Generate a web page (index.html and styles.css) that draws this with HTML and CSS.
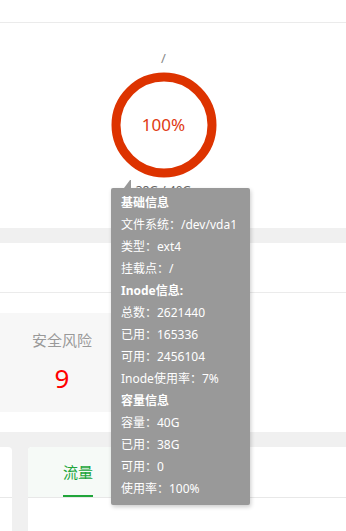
FILE: index.html
```html
<!DOCTYPE html>
<html lang="zh-CN">
<head>
    <meta charset="UTF-8">
    <title>磁盘</title>
    <link rel="stylesheet" href="styles.css">
</head>
<body>
    <div class="page">
        <div class="topbar"></div>

        <div class="disk">
            <div class="disk-name">/</div>
            <div class="ring">
                <svg width="106" height="106" viewBox="0 0 106 106">
                    <circle cx="53" cy="53" r="48" fill="none" stroke="#dd3300" stroke-width="9"/>
                </svg>
                <span class="ring-value">100%</span>
            </div>
            <div class="disk-size">38G / 40G</div>
        </div>

        <div class="band"></div>
        <div class="section-head"></div>

        <div class="stats">
            <div class="stat-card">
                <div class="stat-title">安全风险</div>
                <div class="stat-num">9</div>
            </div>
        </div>

        <div class="band"></div>
        <div class="bottom">
            <div class="card card-left">
                <div class="card-head"></div>
            </div>
            <div class="card card-right">
                <div class="card-head">
                    <div class="tab active"><span>流量</span></div>
                </div>
            </div>
        </div>

        <!-- 磁盘悬浮提示 -->
        <div class="tip">
            <div class="tip-title">基础信息</div>
            <div>文件系统：/dev/vda1</div>
            <div>类型：ext4</div>
            <div>挂载点：/</div>
            <div class="tip-title">Inode信息:</div>
            <div>总数：2621440</div>
            <div>已用：165336</div>
            <div>可用：2456104</div>
            <div>Inode使用率：7%</div>
            <div class="tip-title">容量信息</div>
            <div>容量：40G</div>
            <div>已用：38G</div>
            <div>可用：0</div>
            <div>使用率：100%</div>
        </div>
    </div>
</body>
</html>
```

FILE: styles.css
```css
body {
    margin: 0;
    font-family: "Noto Sans", "Noto Sans CJK SC", sans-serif;
    background: #fff;
    color: #333;
}
.page {
    position: relative;
    width: 346px;
    height: 531px;
    overflow: hidden;
}
.topbar {
    height: 22px;
    border-bottom: 1px solid #ebebeb;
}
.disk {
    height: 205px;
    box-sizing: border-box;
    padding: 26px 19px 0 0;
    display: flex;
    flex-direction: column;
    align-items: center;
}
.disk-name {
    font-size: 13px;
    line-height: 18px;
    color: #888;
}
.ring {
    position: relative;
    width: 106px;
    height: 106px;
    margin-top: 5px;
}
.ring svg {
    display: block;
}
.ring-value {
    position: absolute;
    inset: 0;
    display: flex;
    align-items: center;
    justify-content: center;
    font-size: 17px;
    color: #e03a12;
    padding-bottom: 2px;
    box-sizing: border-box;
}
.disk-size {
    margin-top: 4px;
    font-size: 12px;
    line-height: 18px;
    color: #666;
}
.band {
    height: 15px;
    background: #f0f0f0;
}
.section-head {
    height: 49px;
    border-bottom: 1px solid #ebebeb;
}
.stats {
    height: 139px;
    box-sizing: border-box;
    padding-top: 20px;
}
.stat-card {
    width: 124px;
    height: 99px;
    background: #f7f7f7;
    display: flex;
    flex-direction: column;
    align-items: center;
    justify-content: center;
}
.stat-title {
    font-size: 15px;
    line-height: 20px;
    color: #999;
    margin-top: -3px;
}
.stat-num {
    margin-top: 13px;
    font-size: 26px;
    line-height: 30px;
    color: #f00;
}
.bottom {
    display: flex;
    gap: 16px;
    background: #f0f0f0;
    height: 84px;
}
.card {
    background: #fff;
    border-radius: 4px 4px 0 0;
}
.card-left {
    width: 12px;
    border-top-left-radius: 0;
}
.card-right {
    flex: 1;
    border-top-right-radius: 0;
}
.card-head {
    height: 50px;
    border-bottom: 1px solid #e8e8e8;
    display: flex;
}
.tab {
    width: 100px;
    display: flex;
    justify-content: center;
    align-items: center;
    font-size: 15px;
    color: #20a53a;
}
.tab.active {
    background: #f6faf7;
    border-top-left-radius: 4px;
}
.tab.active span {
    height: 50px;
    line-height: 50px;
    box-sizing: border-box;
    border-bottom: 2px solid #20a53a;
}
.tip {
    position: absolute;
    left: 111px;
    top: 188px;
    width: 139px;
    box-sizing: border-box;
    padding: 4px 10px 5px;
    background: #999;
    border-radius: 2px;
    box-shadow: 1px 2px 4px rgba(0,0,0,0.2);
    font-size: 12px;
    line-height: 22px;
    color: #fff;
    white-space: nowrap;
}
.tip::before {
    content: "";
    position: absolute;
    left: 13px;
    top: -8px;
    border-style: solid;
    border-width: 0 1px 8px 6px;
    border-color: transparent #999 #999 transparent;
}
.tip-title {
    font-weight: bold;
}
```
